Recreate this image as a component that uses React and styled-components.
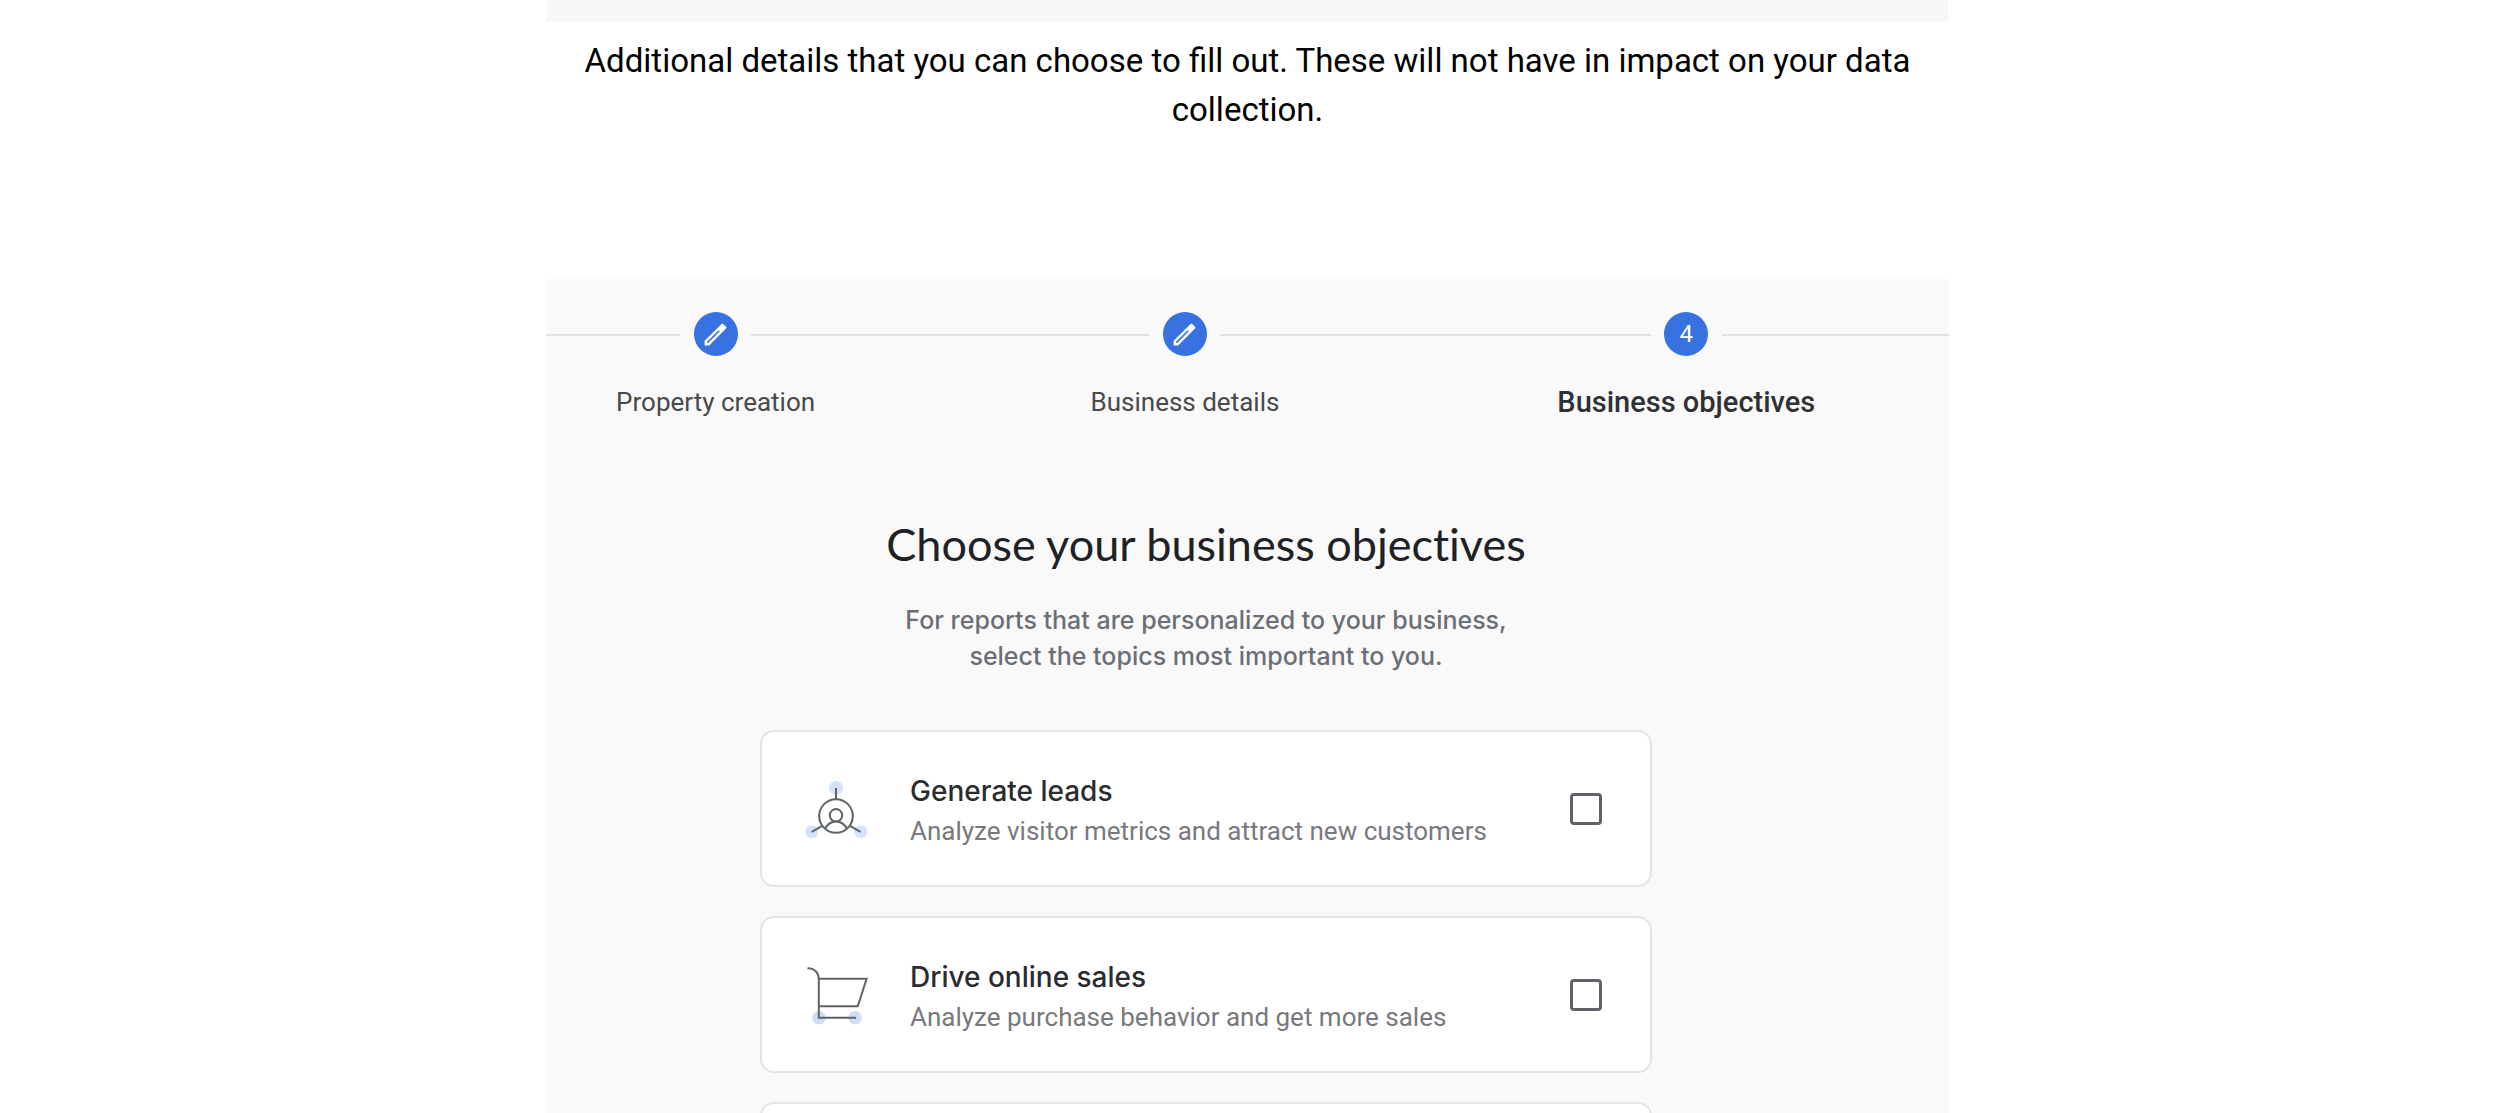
import React, { useState } from 'react';
import styled, { createGlobalStyle } from 'styled-components';

//icons
const PencilIcon = () => (
    <svg width="29" height="29" viewBox="0 0 24 24" fill="currentColor" aria-hidden="true">
        <path d="M14.6 8.4l1 1L5.92 19H5v-.92l9.6-9.68M17.66 3c-.25 0-.51.1-.7.29l-1.83 1.83L3 17.25V21h3.75L20.71 7.04c.39-.39.39-1.02 0-1.41l-2.34-2.34c-.2-.2-.45-.29-.71-.29z" fillRule="evenodd" />
    </svg>
);

const LeadsIcon = () => (
    <svg width="64" height="64" viewBox="0 0 64 64" fill="none" aria-hidden="true">
        <g fill="#d5e2fb">
            <circle cx="32" cy="11" r="7" />
            <circle cx="7.7" cy="54.7" r="6.5" />
            <circle cx="56.7" cy="54.7" r="6.5" />
        </g>
        <g stroke="#5f6368" strokeWidth="2">
            <circle cx="32" cy="39" r="16.8" />
            <circle cx="32" cy="38.3" r="6.2" />
            <path d="M21 51.5C24 46.5 28 44.5 32 44.5s8 2 11 7" />
            <path d="M32 11v11.5M7.7 54.8l10.5-6M56.5 54.8l-10.5-6" />
        </g>
    </svg>
);

const CartIcon = () => (
    <svg width="64" height="64" viewBox="0 0 64 64" fill="none" aria-hidden="true">
        <g fill="#cfdcf8">
            <circle cx="15" cy="54.7" r="6.7" />
            <circle cx="51" cy="54.7" r="6.7" />
        </g>
        <g stroke="#5f6368" strokeWidth="2">
            <path d="M3.5 5.4c6-.6 11 3.6 11.3 10.3V54.7H52" />
            <path d="M14.8 15.7H62.6L53.8 43.2H14.8" />
        </g>
    </svg>
);

const steps = [
    { name: 'Property creation', done: true },
    { name: 'Business details', done: true },
    { name: 'Business objectives', number: 4 },
];

const objectives = [
    {
        id: 'leads',
        title: 'Generate leads',
        text: 'Analyze visitor metrics and attract new customers',
        icon: <LeadsIcon />,
    },
    {
        id: 'sales',
        title: 'Drive online sales',
        text: 'Analyze purchase behavior and get more sales',
        icon: <CartIcon />,
    },
];

const App = () => {
    const [selected, setSelected] = useState([]);

    const toggle = (id) => {
        setSelected(selected.includes(id) ? selected.filter((s) => s !== id) : [...selected, id]);
    }

    return (
        <>
            <GlobalStyle />
            <Page>
                <Article>
                    <PanelEnd />
                    <Caption>
                        Additional details that you can choose to fill out. These will not have in impact on your data collection.
                    </Caption>
                    <Panel>
                        <Stepper>
                            <Line />
                            {steps.map((step) => (
                                <React.Fragment key={step.name}>
                                    <Step>
                                        {step.done
                                            ? <Marker aria-label={`Edit ${step.name}`}><PencilIcon /></Marker>
                                            : <Marker aria-current="step">{step.number}</Marker>}
                                        <StepName $active={!step.done}>{step.name}</StepName>
                                    </Step>
                                    <Line />
                                </React.Fragment>
                            ))}
                        </Stepper>
                        <Content>
                            <Title>Choose your business objectives</Title>
                            <Intro>
                                For reports that are personalized to your business,<br />
                                select the topics most important to you.
                            </Intro>
                            <Cards>
                                {objectives.map(({ id, title, text, icon }) => (
                                    <Card key={id} htmlFor={id}>
                                        {icon}
                                        <CardText>
                                            <h3>{title}</h3>
                                            <p>{text}</p>
                                        </CardText>
                                        <Checkbox
                                            type="checkbox"
                                            id={id}
                                            checked={selected.includes(id)}
                                            onChange={() => toggle(id)}
                                        />
                                    </Card>
                                ))}
                                <Card as="div" />
                            </Cards>
                        </Content>
                    </Panel>
                </Article>
            </Page>
        </>
    );
}

const GlobalStyle = createGlobalStyle`
  * {
    box-sizing: border-box;
    margin: 0;
    padding: 0;
  }
  body {
    background: white;
    font-family: Roboto, "Liberation Sans", sans-serif;
  }
`
const Page = styled.main`
  height: 100vh;
  overflow: hidden;
  padding-right: 5px;
`
const Article = styled.article`
  width: 100%;
  max-width: 1403px;
  margin: 0 auto;
`
const PanelEnd = styled.div`
  height: 22px;
  margin: 0 1px;
  background: #f8f8f8;
`
const Caption = styled.p`
  padding: 14px 32px 145px;
  color: black;
  font-size: 33px;
  line-height: 49px;
  text-align: center;
`
const Panel = styled.section`
  padding-top: 33px;
  background: #f9f9f9;
`
const Stepper = styled.nav`
  display: grid;
  grid-template-columns: 134fr auto 398fr auto 430fr auto 227fr;
`
const Line = styled.div`
  height: 2px;
  margin-top: 22px;
  background: #e1e1e1;
`
const Step = styled.div`
  display: flex;
  flex-direction: column;
  align-items: center;
  width: 71px;
`
const Marker = styled.button`
  display: flex;
  align-items: center;
  justify-content: center;
  width: 44px;
  height: 44px;
  border: none;
  border-radius: 50%;
  background: #3871e0;
  color: white;
  font: 400 24px Roboto, "Liberation Sans", sans-serif;
  cursor: pointer;
`
const StepName = styled.span`
  margin-top: 28px;
  color: ${({ $active }) => ($active ? '#303134' : '#48494b')};
  font-size: ${({ $active }) => ($active ? '29px' : '26px')};
  font-weight: ${({ $active }) => ($active ? 500 : 400)};
  line-height: 36px;
  white-space: nowrap;
`
const Content = styled.div`
  display: flex;
  flex-direction: column;
  align-items: center;
  padding: 96px 83px 0 0;
`
const Title = styled.h1`
  color: #202124;
  font-family: Lato, "Liberation Sans", sans-serif;
  font-size: 45px;
  font-weight: 400;
  font-variant-ligatures: none;
  line-height: 56px;
`
const Intro = styled.p`
  margin-top: 30px;
  color: #6b6f75;
  font-family: Inter, "Liberation Sans", sans-serif;
  font-size: 25px;
  font-weight: 500;
  line-height: 36px;
  text-align: center;
`
const Cards = styled.div`
  display: flex;
  flex-direction: column;
  gap: 29px;
  width: 100%;
  max-width: 892px;
  margin-top: 56px;
`
const Card = styled.label`
  display: flex;
  align-items: center;
  gap: 42px;
  min-height: 157px;
  padding: 0 48px 0 42px;
  border: 2px solid #e3e4e8;
  border-radius: 14px;
  background: white;
`
const CardText = styled.div`
  flex: 1;
  h3 {
    color: #2b2c2f;
    font-family: Inter, "Liberation Sans", sans-serif;
    font-size: 28px;
    font-weight: 500;
    line-height: 44px;
  }
  p {
    color: #77797e;
    font-size: 26px;
    line-height: 36px;
  }
`
const Checkbox = styled.input`
  appearance: none;
  width: 32px;
  height: 32px;
  border: 3px solid #5f6368;
  border-radius: 4px;
  &:checked {
    background: #3871e0;
  }
`;


export default App;
